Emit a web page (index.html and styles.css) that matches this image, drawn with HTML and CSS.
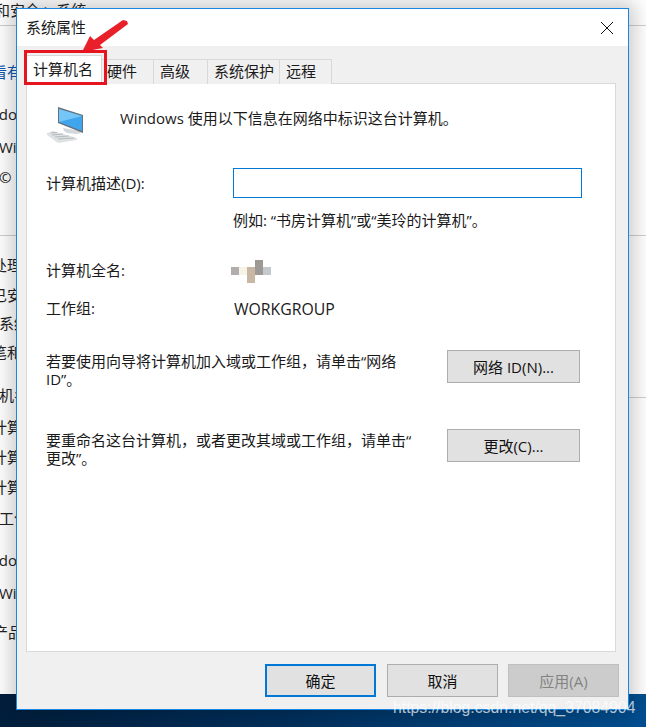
FILE: index.html
```html
<!DOCTYPE html>
<html lang="zh-CN">
<head>
<meta charset="utf-8">
<title>系统属性</title>
<link rel="stylesheet" href="styles.css">
</head>
<body>
<div class="desktop">
  <div class="bgwin">
    <div class="bgline bl-1">和安全 &gt; 系统</div>
    <div class="bgrule rule-1"></div>
    <div class="bgline bl-2 blue">看有</div>
    <div class="bgline bl-3">Windows</div>
    <div class="bgline bl-4">Windows</div>
    <div class="bgline bl-5">© 2018</div>
    <div class="bgrule rule-2"></div>
    <div class="bgline bl-6">处理器</div>
    <div class="bgline bl-7">已安装</div>
    <div class="bgline bl-8">系统类</div>
    <div class="bgline bl-9">笔和触</div>
    <div class="bgline bl-10">机名称</div>
    <div class="bgline bl-11">计算机</div>
    <div class="bgline bl-12">计算机</div>
    <div class="bgline bl-13">计算机</div>
    <div class="bgline bl-14">工作组</div>
    <div class="bgline bl-15">Windows</div>
    <div class="bgline bl-16">Windows</div>
    <div class="bgline bl-17">产品 ID</div>
    <div class="bgrule rule-3"></div>
  </div>
  <div class="taskbar"></div>

  <div class="dialog">
    <div class="titlebar">
      <span class="title">系统属性</span>
      <svg class="close" width="14" height="14" viewBox="0 0 14 14"><path d="M1 1 13 13M13 1 1 13" stroke="#111" stroke-width="1" fill="none"/></svg>
    </div>
    <div class="body">
      <div class="tabs">
        <div class="tab active t1">计算机名</div>
        <div class="tab t2">硬件</div>
        <div class="tab t3">高级</div>
        <div class="tab t4">系统保护</div>
        <div class="tab t5">远程</div>
      </div>
      <div class="page">
        <div class="intro">
          <svg class="pc" width="42" height="44" viewBox="0 0 42 44">
            <polygon points="17,28 34,31 35,33 31,34 21,33 18,31" fill="#d5d8da"/>
            <polygon points="1,33 7,31 31,38 31,40 12,43 1,35" fill="#dfe2e3"/>
            <path d="M5 33 11 32.500M6 35 17 34M9 37 23 36M12 39 28 38" stroke="#b5b9bb" stroke-width="1" fill="none"/>
            <polygon points="12,7 37,15 37,33 12,23" fill="#65707a"/>
            <polygon points="13,9 36,16 36,31 13,22" fill="#3fa6ee"/>
            <polygon points="13,9 36,16 13,22" fill="#74c6f7"/>
          </svg>
          <span>Windows 使用以下信息在网络中标识这台计算机。</span>
        </div>
        <div class="form">
          <label class="lbl">计算机描述(D):</label>
          <div class="field"></div>
          <div class="hint">例如: “书房计算机”或“美玲的计算机”。</div>
          <div class="lbl name-l">计算机全名:</div>
          <svg class="blur name-v" width="40" height="24" viewBox="0 0 40 24">
            <rect x="0" y="7" width="8" height="8" fill="#b1adad"/>
            <rect x="8" y="7" width="8" height="8" fill="#f7f3e6"/>
            <rect x="16" y="7" width="8" height="16" fill="#c9b7a5"/>
            <rect x="24" y="0" width="8" height="15" fill="#9d9a95"/>
            <rect x="32" y="7" width="8" height="8" fill="#c3c9cd"/>
          </svg>
          <div class="lbl wg-l">工作组:</div>
          <div class="wg-v">WORKGROUP</div>
        </div>
        <div class="action a1">
          <p>若要使用向导将计算机加入域或工作组，请单击“网络<br>ID”。</p>
          <button class="btn wide">网络 ID(N)...</button>
        </div>
        <div class="action a2">
          <p>要重命名这台计算机，或者更改其域或工作组，请单击“<br>更改”。</p>
          <button class="btn wide">更改(C)...</button>
        </div>
      </div>
      <div class="footer">
        <button class="btn foot primary">确定</button>
        <button class="btn foot">取消</button>
        <button class="btn foot disabled">应用(A)</button>
      </div>
    </div>
  </div>

  <svg class="arrow" width="50" height="40" viewBox="0 0 50 40">
    <polygon points="0,37 8,21 12,25 41,5 45,6 46,9 18,30 21,33" fill="#e8202a"/>
  </svg>
  <div class="mark"></div>
  <div class="wm">https://blog.csdn.net/qq_37084904</div>
</div>
</body>
</html>
```
FILE: styles.css
```css
* { box-sizing: border-box; }
html, body { margin: 0; padding: 0; }
body { width: 646px; height: 727px; overflow: hidden; font-family: "Open Sans", "Noto Sans CJK SC", sans-serif; font-size: 15px; color: #1a1a1a; }
.desktop { position: relative; width: 646px; height: 727px; background: #fff; overflow: hidden; }
.bgwin { position: absolute; inset: 0; background: #fff; }
.bgline { position: absolute; white-space: nowrap; font-size: 15px; line-height: 20px; color: #222; }
.blue { color: #0a57b0; }
.bl-1 { top: 0; left: -5px; }
.bl-2 { top: 62px; left: -8px; }
.bl-3 { top: 104px; left: -28px; }
.bl-4 { top: 137px; left: -1px; }
.bl-5 { top: 167px; left: -1px; }
.bl-6 { top: 255px; left: -8px; }
.bl-7 { top: 285px; left: -8px; }
.bl-8 { top: 313px; left: -1px; }
.bl-9 { top: 342px; left: -8px; }
.bl-10 { top: 385px; left: -1px; }
.bl-11 { top: 417px; left: -8px; }
.bl-12 { top: 447px; left: -8px; }
.bl-13 { top: 477px; left: -8px; }
.bl-14 { top: 508px; left: -1px; }
.bl-15 { top: 550px; left: -28px; }
.bl-16 { top: 583px; left: -1px; }
.bl-17 { top: 622px; left: -7px; }
.bgrule { position: absolute; height: 1px; background: #cfcfcf; left: 0; right: 0; }
.rule-1 { top: 25px; }
.rule-2 { top: 235px; }
.rule-3 { top: 397px; left: 620px; }
.taskbar { position: absolute; left: 0; right: 0; top: 694px; bottom: 0; background: linear-gradient(90deg, #001f3e 0%, #00305d 45%, #004f92 100%); }

.dialog { position: absolute; left: 16px; top: 8px; width: 613px; height: 702px; border: 1px solid #1787e3; background: #f0f0f0; display: flex; flex-direction: column; box-shadow: 0 0 18px 6px rgba(0,0,0,.2); }
.titlebar { height: 37px; flex: none; background: #fff; display: flex; align-items: center; justify-content: space-between; padding: 0 14px 2px 9px; }
.title { font-size: 15px; }
.close { position: relative; top: 1px; }
.body { flex: 1; display: flex; flex-direction: column; padding: 0 12px 0 9px; }
.tabs { display: flex; height: 38px; flex: none; align-items: flex-end; margin-bottom: -1px; position: relative; z-index: 1; }
.tab { height: 25px; background: #f0f0f0; border: 1px solid #d9d9d9; border-bottom: none; border-left: none; display: flex; align-items: center; justify-content: flex-start; line-height: 1; padding: 0 0 1px 6px; }
.tab.active { height: 29px; background: #fff; border-left: 1px solid #d9d9d9; border-bottom: 1px solid #fff; padding: 0 0 1px 6px; }
.t1 { width: 76px; }
.t2 { width: 52px; padding-left: 5px; }
.t3 { width: 54px; }
.t4 { width: 72px; }
.t5 { width: 52px; }
.page { height: 569px; flex: none; background: #fff; border: 1px solid #d9d9d9; padding: 0 0 0 19px; }
.intro { display: flex; align-items: center; height: 40px; margin-top: 13px; margin-left: -1px; }
.pc { flex: none; margin: 0 32px 0 1px; position: relative; top: 5px; }
.form { display: grid; grid-template-columns: 187px 349px; margin-top: 31px; }
.lbl { line-height: 20px; }
.field { height: 30px; background: #fff; border: 1px solid #0078d7; }
.form > .lbl:first-child { align-self: center; }
.hint { grid-column: 2; margin: 12px 0 0 0; line-height: 20px; }
.name-l { grid-column: 1; margin-top: 30px; }
.name-v { grid-column: 2; margin: 30px 0 0 -2px; }
.wg-l { grid-column: 1; margin-top: 14px; }
.wg-v { grid-column: 2; margin: 15px 0 0 1px; line-height: 20px; font-size: 15.8px; }
.action { display: flex; align-items: flex-start; justify-content: space-between; width: 534px; }
.action p { margin: 0; padding-top: 2px; line-height: 18px; width: 390px; white-space: nowrap; }
.a1 { margin-top: 31px; }
.a2 { margin-top: 41px; }
.btn { font: inherit; color: #111; background: #e1e1e1; border: 1px solid #adadad; padding: 0; display: flex; align-items: center; justify-content: center; }
.wide { width: 133px; height: 33px; }
.footer { flex: 1; display: flex; gap: 11px; justify-content: flex-end; margin-right: -3px; padding-top: 12px; }
.foot { width: 111px; height: 33px; }
.primary { border: 2px solid #0078d7; }
.disabled { background: #cccccc; border-color: #bfbfbf; color: #838383; margin-left: -1px; }

.arrow { position: absolute; z-index: 2; left: 82px; top: 15px; }
.mark { position: absolute; z-index: 2; left: 24px; top: 50px; width: 83px; height: 35px; border: 3px solid #e5141f; }
.wm { position: absolute; z-index: 2; left: 393px; top: 698px; font-family: "Liberation Sans", sans-serif; font-size: 15.8px; line-height: 20px; color: rgba(255,255,255,.7); white-space: nowrap; }
```
